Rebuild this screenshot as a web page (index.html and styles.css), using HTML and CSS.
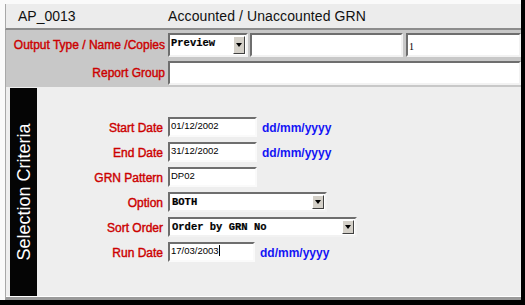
FILE: index.html
```html
<!DOCTYPE html>
<html>
<head>
<meta charset="utf-8">
<link rel="stylesheet" href="styles.css">
</head>
<body>
<div class="screen">
  <div class="header">
    <span class="code">AP_0013</span>
    <span class="title">Accounted / Unaccounted GRN</span>
  </div>
  <div class="params">
    <div class="prow">
      <label class="plabel">Output Type / Name /Copies</label>
      <div class="box select sel-preview"><span class="mono">Preview</span><i class="btn"></i></div>
      <div class="box name"></div>
      <div class="box copies"><span class="num">1</span></div>
    </div>
    <div class="prow">
      <label class="plabel">Report Group</label>
      <div class="box group"></div>
    </div>
  </div>
  <div class="criteria">
    <div class="strip"><span class="strip-text">Selection Criteria</span></div>
    <div class="fields">
      <label class="flabel">Start Date</label>
      <div class="frow"><div class="box field date">01/12/2002</div><span class="fmt">dd/mm/yyyy</span></div>
      <label class="flabel">End Date</label>
      <div class="frow"><div class="box field date">31/12/2002</div><span class="fmt">dd/mm/yyyy</span></div>
      <label class="flabel">GRN Pattern</label>
      <div class="frow"><div class="box field date">DP02</div></div>
      <label class="flabel">Option</label>
      <div class="frow"><div class="box select sel-option"><span class="mono">BOTH</span><i class="btn"></i></div></div>
      <label class="flabel">Sort Order</label>
      <div class="frow"><div class="box select sel-sort"><span class="mono">Order by GRN No</span><i class="btn"></i></div></div>
      <label class="flabel">Run Date</label>
      <div class="frow"><div class="box field run">17/03/2003<i class="caret"></i></div><span class="fmt">dd/mm/yyyy</span></div>
    </div>
  </div>
</div>
</body>
</html>
```
FILE: styles.css
```css
* { box-sizing: border-box; }
html, body { margin: 0; padding: 0; background: #ffffff; }
body { font-family: "Liberation Sans", Arial, sans-serif; }

.screen {
  width: 525px;
  height: 305px;
  padding: 4px 0 0 5px;
  border-right: 4px solid #000;
  border-bottom: 5px solid #000;
  display: flex;
  flex-direction: column;
  background: #fafafa;
}

.header {
  height: 26px;
  background: #ececec;
  border-left: 1px solid #a8a8a8;
  border-bottom: 2px solid #8c8c8c;
  display: flex;
  align-items: center;
  font-size: 14px;
  color: #111;
}
.code { width: 162px; padding-left: 12px; }
.title { letter-spacing: 0.1px; }

.params {
  height: 57px;
  background: #c8c8c8;
  border-left: 1px solid #a8a8a8;
  padding: 3px 0 3px 0;
  display: flex;
  flex-direction: column;
  gap: 4px;
}
.prow { display: flex; height: 24px; }
.plabel {
  width: 159px;
  margin-right: 3px;
  text-align: right;
  color: #cc0000;
  font-size: 12px;
  line-height: 24px;
  -webkit-text-stroke: 0.4px #cc0000;
}

.box {
  background: #fff;
  border-style: solid;
  border-width: 2px;
  border-color: #6e6e6e #f2f2f2 #f2f2f2 #6e6e6e;
  position: relative;
}
.sel-preview { width: 80px; padding: 2px 0 0 1px; }
.name { width: 153px; margin-left: 2px; }
.copies { flex: 1; margin-left: 3px; padding: 1px 0 0 1px; }
.group { flex: 1; }
.num { font-family: "Liberation Serif", serif; font-size: 10px; line-height: 11px; color: #000; }

.mono {
  font-family: "Liberation Mono", "Courier New", monospace;
  font-weight: bold;
  font-size: 10.5px;
  color: #000;
  -webkit-text-stroke: 0.2px #000;
}
.select { display: flex; align-items: flex-start; }
.btn {
  position: absolute;
  right: 1px;
  top: 1px;
  bottom: 1px;
  width: 12px;
  background: #d4d0c8;
  border-style: solid;
  border-width: 1px;
  border-color: #ffffff #404040 #404040 #ffffff;
}
.btn::after {
  content: "";
  position: absolute;
  left: 2px;
  top: 50%;
  margin-top: -2px;
  border-left: 3px solid transparent;
  border-right: 3px solid transparent;
  border-top: 4px solid #000;
}

.criteria {
  flex: 1;
  display: flex;
  background: #eeeeee;
  border-left: 1px solid #a8a8a8;
  border-bottom: 3px solid #9a9a9a;
  padding: 1px 0 1px 4px;
  box-shadow: inset 0 -1px 0 #ffffff;
}
.strip {
  width: 27px;
  background: #050505;
  display: flex;
  align-items: center;
  justify-content: center;
  position: relative;
}
.strip-text {
  position: absolute;
  left: 50%;
  top: 50%;
  transform: translate(-50%, -50%) rotate(-90deg);
  white-space: nowrap;
  color: #fff;
  font-size: 18px;
  line-height: 20px;
}

.fields {
  flex: 1;
  display: grid;
  grid-template-columns: 126px 1fr;
  grid-auto-rows: 20px;
  row-gap: 5px;
  column-gap: 5px;
  padding-top: 29px;
  align-content: start;
}
.flabel {
  text-align: right;
  color: #cc0000;
  font-size: 12px;
  line-height: 20px;
  padding-top: 1px;
  -webkit-text-stroke: 0.4px #cc0000;
}
.frow { display: flex; align-items: center; gap: 5px; }
.field {
  height: 20px;
  font-size: 9.5px;
  line-height: 11px;
  padding: 1px 0 0 1px;
  color: #000;
  border-color: #6e6e6e #fafafa #fafafa #6e6e6e;
}
.date { width: 89px; }
.run { width: 87px; }
.caret {
  display: inline-block;
  width: 1px;
  height: 11px;
  background: #000;
  vertical-align: top;
}
.sel-option { width: 159px; height: 20px; align-items: center; padding-left: 2px; }
.sel-sort { width: 189px; height: 20px; align-items: center; padding-left: 2px; }
.fmt {
  color: #1515f5;
  font-size: 12px;
  font-weight: bold;
  padding-top: 2px;
}
```
